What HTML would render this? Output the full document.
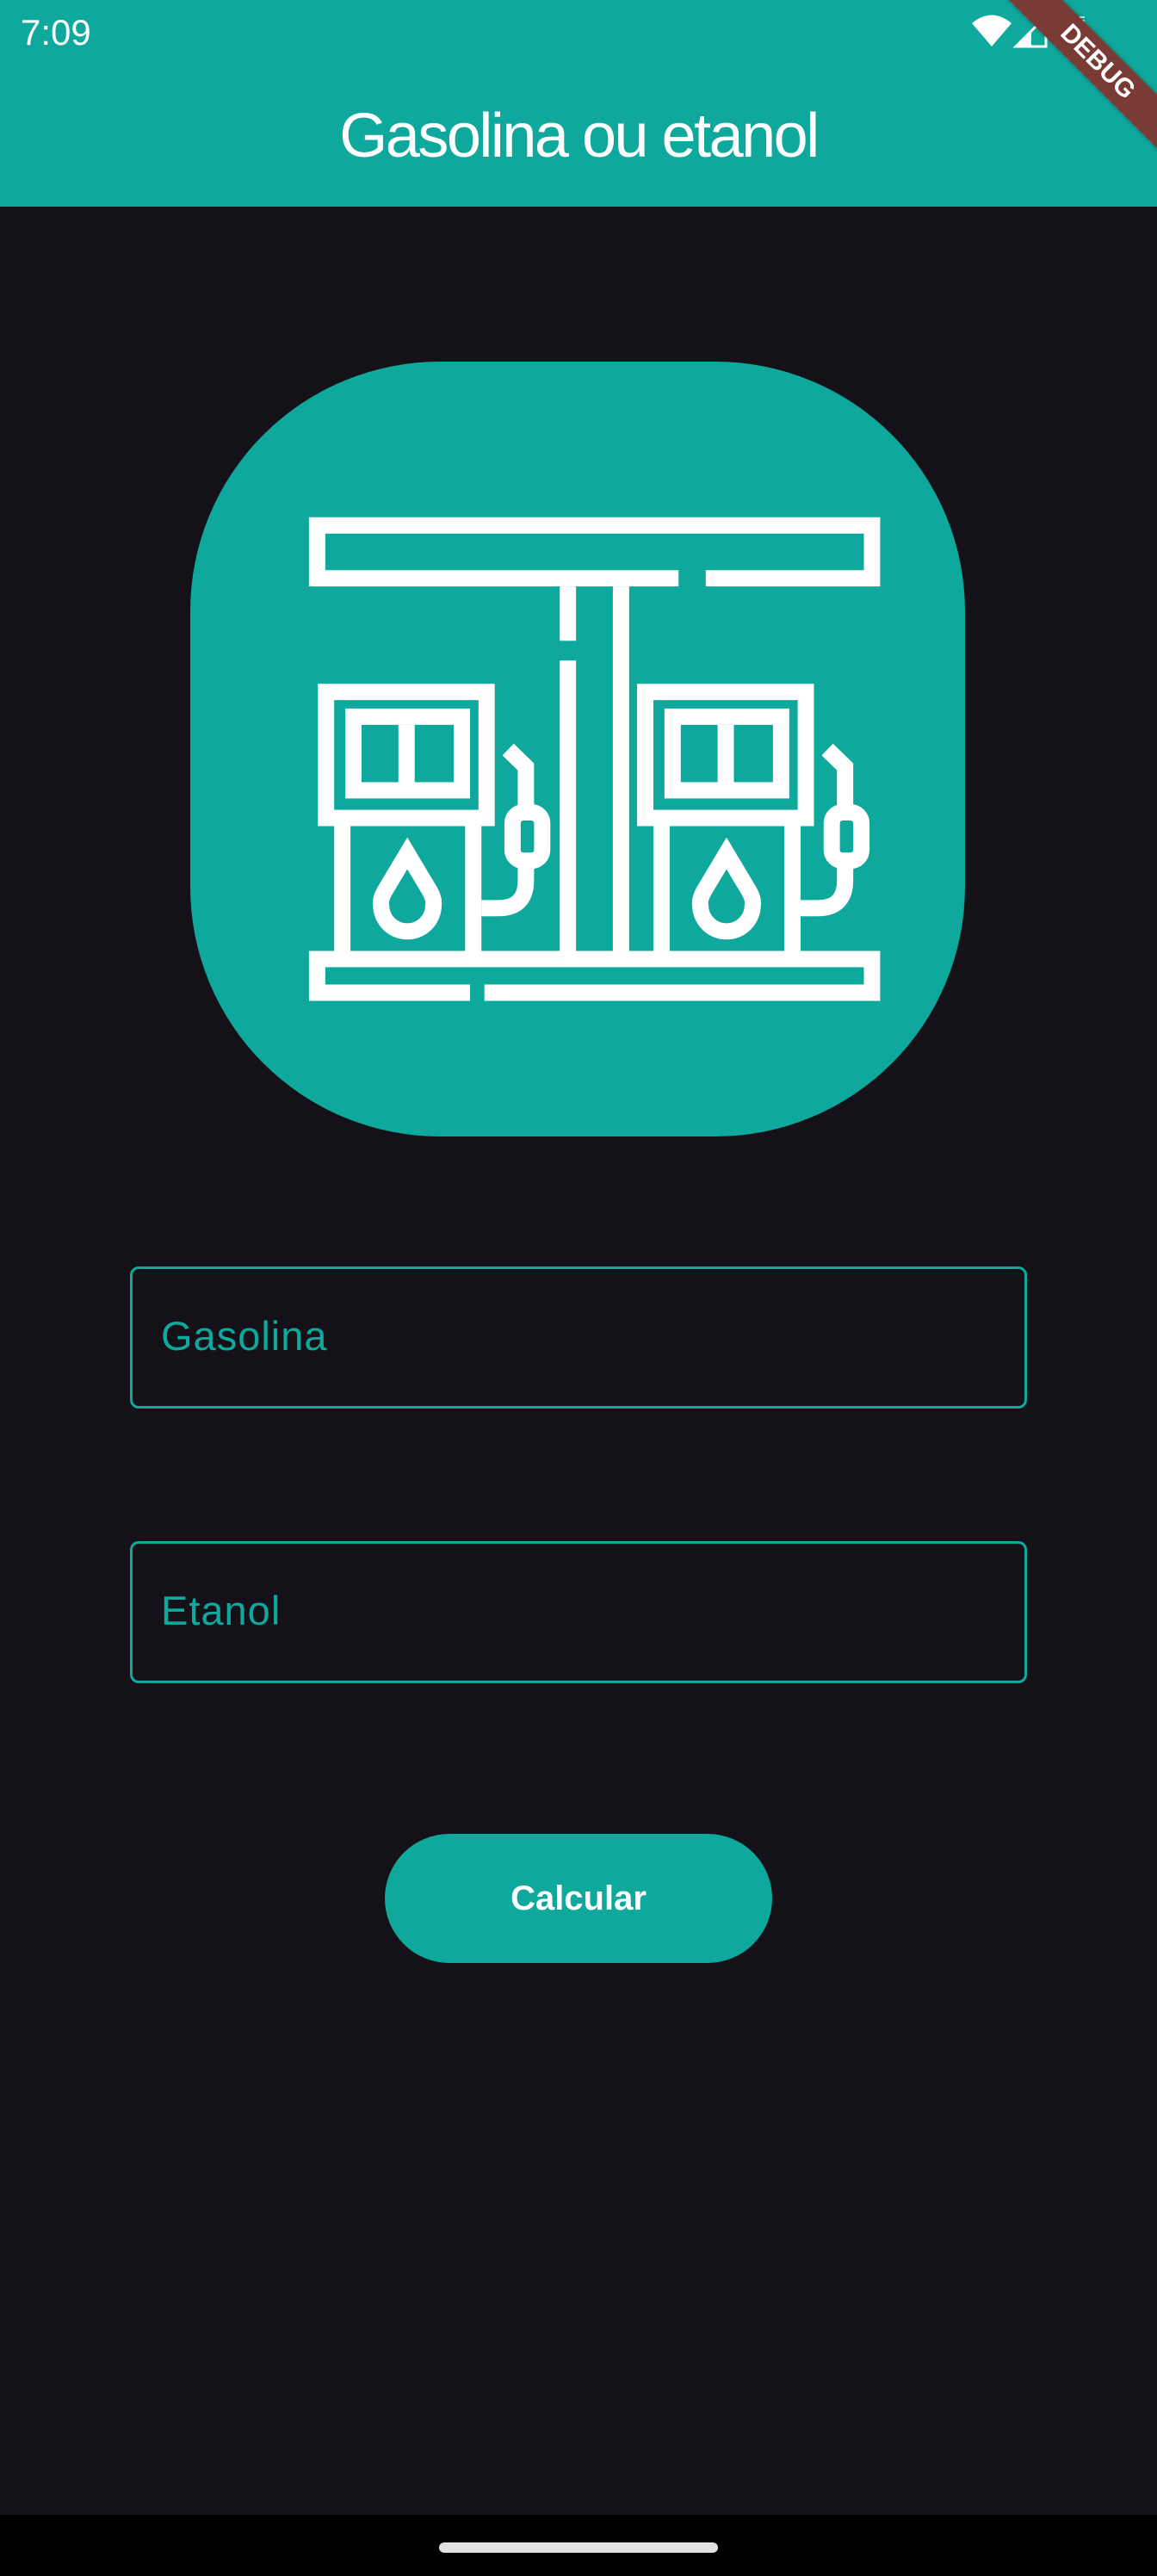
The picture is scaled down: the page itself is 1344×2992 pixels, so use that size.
<!DOCTYPE html>
<html><head><meta charset="utf-8"><style>
*{margin:0;padding:0;box-sizing:border-box}
body{width:1344px;height:2992px;background:#141118;position:relative;overflow:hidden;font-family:"Liberation Sans",sans-serif}
.abs{position:absolute}
</style></head><body>
<div class="abs" style="left:0;top:0;width:1344px;height:240px;background:#0ea89c"></div>
<div class="abs" style="left:24px;top:14px;font-size:42px;color:#fff;line-height:48px">7:09</div>
<svg class="abs" style="left:1120px;top:10px" width="224" height="60" viewBox="0 0 224 60">
<path d="M9 17 Q32 -2 55 17 L32 44 Z" fill="#fff"/>
<path d="M60 44 L95 9 V44 Z" fill="none" stroke="#fff" stroke-width="3"/>
<path d="M60 44 L78 26 V44 Z" fill="#fff"/>
<g stroke="#fff" stroke-width="1.5"><line x1="117" y1="10" x2="140" y2="10"/><line x1="117" y1="14" x2="140" y2="14"/><line x1="117" y1="18" x2="140" y2="18"/><line x1="117" y1="22" x2="140" y2="22"/><line x1="117" y1="26" x2="140" y2="26"/><line x1="117" y1="30" x2="140" y2="30"/><line x1="117" y1="34" x2="140" y2="34"/><line x1="117" y1="38" x2="140" y2="38"/><line x1="117" y1="42" x2="140" y2="42"/></g>
</svg>
<div class="abs" style="left:1125px;top:50px;width:300px;height:44px;background:#7a3a35;transform:rotate(45deg);color:#fff;font-weight:bold;font-size:30px;line-height:44px;text-align:center;box-shadow:0 0 6px rgba(0,0,0,0.3)">DEBUG</div>
<div class="abs" style="left:0;top:118px;width:1344px;text-align:center;color:#fff;font-size:72px;letter-spacing:-2.5px;line-height:80px">Gasolina ou etanol</div>

<div class="abs" style="left:221px;top:420px;width:900px;height:900px;background:#0ea89c;border-radius:290px"></div>
<svg class="abs" style="left:220px;top:420px" width="900" height="900" viewBox="0 0 1568 1568">
<g fill="none" stroke="#fff" stroke-width="33">
<path d="M990 438.5 H258.5 V331.5 H1381.5 V438.5 H1045"/>
<path d="M766 455 V565 M766 605 V1193 M873.5 455 V1193"/>
<path d="M568 1277 H258.5 V1209 H1381.5 V1277 H597"/>
<g id="p">
<rect x="276.5" y="668.5" width="325" height="255"/>
<path d="M309.5 940 V1193 M574.5 940 V1193"/>
<rect x="332" y="718.5" width="219.5" height="149"/>
<path d="M439.5 735 V851"/>
<path d="M441 995 L395 1072 Q386 1088 388 1100 A53 53 0 0 0 494 1100 Q496 1088 487 1072 Z"/>
<rect x="654" y="912" width="60" height="98" rx="22"/>
<path d="M681 912 V820 L645 785"/>
<path d="M591 1106 H625 Q681 1106 681 1050 V1010"/>
</g>
<use href="#p" transform="translate(646,0)"/>
</g>
</svg>

<div class="abs" style="left:151px;top:1471px;width:1042px;height:165px;border:3px solid #0ea89c;border-radius:10px"></div>
<div class="abs" style="left:187px;top:1524px;font-size:47px;letter-spacing:1px;color:#0ea89c;line-height:56px">Gasolina</div>
<div class="abs" style="left:151px;top:1790px;width:1042px;height:165px;border:3px solid #0ea89c;border-radius:10px"></div>
<div class="abs" style="left:187px;top:1843px;font-size:47px;letter-spacing:1px;color:#0ea89c;line-height:56px">Etanol</div>

<div class="abs" style="left:447px;top:2130px;width:450px;height:150px;background:#0ea89c;border-radius:75px;color:#fff;font-weight:bold;font-size:40px;text-align:center;line-height:150px">Calcular</div>

<div class="abs" style="left:0;top:2921px;width:1344px;height:71px;background:#000"></div>
<div class="abs" style="left:510px;top:2953px;width:324px;height:12px;background:#e2e2e2;border-radius:6px"></div>
</body></html>
